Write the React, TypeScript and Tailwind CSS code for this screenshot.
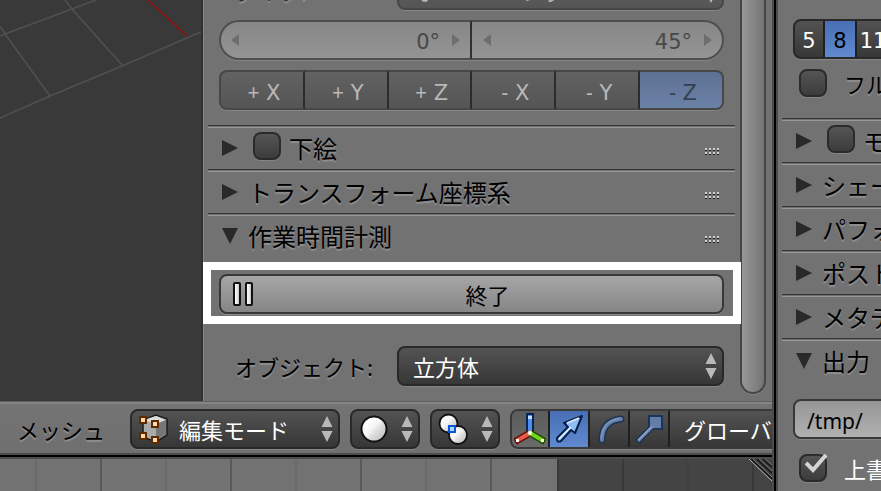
import type { ReactNode } from "react";

const engraved = "[text-shadow:0_2px_1px_rgba(255,255,255,0.22)]";
const dropdown =
  "h-10 rounded-lg border-2 border-[#292929] bg-linear-to-b from-[#535353] to-[#373737] text-white shadow-[0_1px_0_#858585]";

function Disclosure({ open = false }: { open?: boolean }) {
  return (
    <svg className="h-4 w-4 shrink-0" viewBox="0 0 16 16" aria-hidden="true">
      <path d={open ? "M0 0H16L8 16Z" : "M0 0L16 8L0 16Z"} fill="#292929" />
    </svg>
  );
}

function Spinner({ className = "" }: { className?: string }) {
  return (
    <svg className={`pointer-events-none h-[26px] w-3 shrink-0 ${className}`} viewBox="0 0 12 26" fill="#b9b9b9" aria-hidden="true">
      <path d="M6 0L11.5 11H.5ZM6 26L.5 15H11.5Z" />
    </svg>
  );
}

function Grip() {
  return (
    <svg className="mt-2 h-[7px] w-[15px]" viewBox="0 0 15 7" shapeRendering="crispEdges" aria-hidden="true">
      {[0, 4, 8, 12].map((x) =>
        [0, 4].map((y) => (
          <g key={`${x}-${y}`}>
            <rect x={x} y={y} width="2" height="2" fill="#d0d0d0" />
            <rect x={x} y={y + 2} width="2" height="1" fill="#222" />
          </g>
        )),
      )}
    </svg>
  );
}

function Tick({ label, checked = false }: { label: string; checked?: boolean }) {
  return (
    <span className="relative h-7 w-7 shrink-0">
      <input
        type="checkbox"
        aria-label={label}
        defaultChecked={checked}
        className="block h-7 w-7 appearance-none rounded-lg border-2 border-[#2b2b2b] bg-linear-to-b from-[#555] to-[#3c3c3c] shadow-[0_1px_0_#858585]"
      />
      {checked && (
        <svg className="pointer-events-none absolute top-0 left-1.5 h-5 w-6" viewBox="0 0 24 20" fill="none" aria-hidden="true">
          <path d="M1 9L8 16L21 1" stroke="#d4d4d4" strokeWidth="4" />
        </svg>
      )}
    </span>
  );
}

function Section({ title, open, tick, grip }: { title: string; open?: boolean; tick?: boolean; grip?: boolean }) {
  return (
    <div className="flex h-11 shrink-0 items-center border-t border-[#353535] pl-3.5 shadow-[inset_0_1px_0_#707070,inset_0_2px_0_#989898]">
      <button type="button" aria-label={title} aria-expanded={!!open} className="flex">
        <Disclosure open={open} />
      </button>
      {tick && (
        <span className="-mt-1 ml-[15px] flex">
          <Tick label={title} />
        </span>
      )}
      <h2 className={`flex-1 text-[24px] leading-8 whitespace-nowrap text-black ${tick ? "ml-2" : "ml-2.5"} ${engraved}`}>{title}</h2>
      {grip && <div className="mr-[15px] flex"><Grip /></div>}
    </div>
  );
}

function NumberField({ label, value, side }: { label: string; value: string; side: "left" | "right" }) {
  return (
    <div
      className={`flex h-10 min-w-0 flex-1 items-center border-2 border-[#4e4e4e] bg-linear-to-b from-[#878787] to-[#949494] shadow-[0_1px_0_#858585] ${
        side === "left" ? "rounded-l-full border-r-[#303030] px-2.5" : "rounded-r-full border-l-0 pr-2.5 pl-[11px]"
      }`}
    >
      <svg className="h-3 w-2 shrink-0" viewBox="0 0 8 12" aria-hidden="true"><path d="M8 0V12L0 6Z" fill="#6e6e6e" /></svg>
      <input
        aria-label={label}
        defaultValue={value}
        className="mt-1 min-w-0 flex-1 bg-transparent pr-3 text-right font-['DejaVu_Sans',sans-serif] text-[21px] leading-8 text-[#484848] outline-none"
      />
      <svg className="h-3 w-2 shrink-0" viewBox="0 0 8 12" aria-hidden="true"><path d="M0 0V12L8 6Z" fill="#6e6e6e" /></svg>
    </div>
  );
}

function AxisButtons() {
  const axes = ["+ X", "+ Y", "+ Z", "- X", "- Y", "- Z"];
  return (
    <div className="flex h-10 rounded-lg shadow-[0_1px_0_#858585]">
      {axes.map((axis, i) => (
        <button
          key={axis}
          type="button"
          aria-pressed={i === 5}
          className={`flex-1 border-y-2 border-[#474747] bg-linear-to-b pt-1 pl-1 font-['DejaVu_Sans',sans-serif] text-[21px] leading-8 ${
            i < 5 ? "border-r-2 border-r-[#2c2c2c] from-[#626262] to-[#555] text-[#b8b8b8]" : "rounded-r-lg border-r-2 from-[#5c7193] to-[#6c81a6] text-[#343f52]"
          } ${i === 0 ? "rounded-l-lg border-l-2" : ""}`}
        >
          <span className="font-['Noto_Sans',sans-serif]">{axis[0]}</span>
          {axis.slice(1)}
        </button>
      ))}
    </div>
  );
}

function Viewport() {
  return (
    <div className="min-w-0 flex-1 overflow-hidden border-r-2 border-[#303030] bg-[#393939]">
      <svg className="h-[402px] w-[203px]" viewBox="0 0 203 402" fill="none" stroke="#505050" strokeWidth="1.6" aria-hidden="true">
        <path d="M0 118L50 96L122 66L203 31M0 36L5 34L72 9L96 0M0 26L5 34L50 96M65 0L72 9L122 65" />
        <path d="M148 0L187 36" stroke="#960d0d" />
      </svg>
    </div>
  );
}

function ToolPanel() {
  return (
    <div className="flex w-[569px] shrink-0 overflow-hidden bg-[#727272] shadow-[inset_1px_0_0_#858585]">
      <div className="-mt-[30px] flex w-[538px] shrink-0 flex-col">
        <div className="flex flex-col gap-2.5 pr-[17px] pl-4">
          <div className="flex h-10 items-center">
            <label htmlFor="kind" className={`w-[178px] pl-4 text-[22px] leading-8 text-[#333] ${engraved}`}>タイプ:</label>
            <div className="relative flex-1">
              <select id="kind" className="block h-10 w-full appearance-none rounded-lg border-2 border-[#474747] bg-linear-to-b from-[#626262] to-[#555] px-3.5 text-[22px] text-[#b8b8b8] shadow-[0_1px_0_#858585]">
                <option>オーバーハング</option>
              </select>
              <Spinner className="absolute top-[7px] right-[7px]" />
            </div>
          </div>
          <div className="flex">
            <NumberField label="最小角度" value="0°" side="left" />
            <NumberField label="最大角度" value="45°" side="right" />
          </div>
          <AxisButtons />
        </div>
        <div className="mt-[15px] mr-1.5 ml-[5px]">
          <Section title="下絵" tick grip />
          <Section title="トランスフォーム座標系" grip />
          <Section title="作業時間計測" open grip />
        </div>
        <div className="z-10 mt-[5px] border-8 border-white bg-[#727272] pt-1 pr-[9px] pb-0.5 pl-2">
          <button type="button" className="flex h-10 w-full items-center rounded-lg border-2 border-[#383838] bg-linear-to-b from-[#a6a6a6] to-[#868686] pl-3 shadow-[0_1px_0_#909090]">
            <svg className="h-6 w-5 shrink-0" viewBox="0 0 20 24" aria-hidden="true">
              <defs>
                <linearGradient id="pause" x2="1"><stop stopColor="#fff" /><stop offset=".5" stopColor="#eee" /><stop offset="1" stopColor="#aaa" /></linearGradient>
              </defs>
              <g fill="url(#pause)" stroke="#111" strokeWidth="2">
                <rect x="1" y="1" width="6" height="22" rx="1" />
                <rect x="13" y="1" width="6" height="22" rx="1" />
              </g>
            </svg>
            <span className="flex-1 text-center text-[22px] leading-8 text-black">終了</span>
          </button>
        </div>
        <div className="mt-[22px] flex h-10 items-center pr-[17px] pl-4">
          <label htmlFor="object" className={`w-[178px] pl-4 text-[22px] leading-8 text-black ${engraved}`}>オブジェクト:</label>
          <div className="relative flex-1">
            <select id="object" className={`block w-full appearance-none px-3.5 text-[22px] ${dropdown}`}>
              <option>立方体</option>
            </select>
            <Spinner className="absolute top-[7px] right-[7px]" />
          </div>
        </div>
      </div>
      <div className="-ml-px h-[394px] w-[26px] rounded-b-full border-x-2 border-b-2 border-[#464646] bg-linear-to-r from-[#989898] to-[#747474] shadow-[0_1px_0_#858585]" />
    </div>
  );
}

function EditModeIcon() {
  return (
    <svg className="h-[30px] w-[30px] shrink-0" viewBox="0 0 30 30" aria-hidden="true">
      <path d="M4 6L17 1L28 5V21L17 28L4 23Z" fill="#aaa" stroke="#1a1a1a" strokeWidth="1.500" />
      <path d="M5 6L17 2L27 6L17 10Z" fill="#ddd" />
      <path d="M17 10L27 6V21L17 26Z" fill="#777" />
      <g fill="#ffd9a8" stroke="#5a2c00" strokeWidth="2">
        <rect x="1" y="3" width="6" height="6" /><rect x="13" y="7" width="6" height="6" />
        <rect x="1" y="19" width="6" height="6" /><rect x="13" y="23" width="6" height="6" />
      </g>
    </svg>
  );
}

function ManipulatorButton({ label, active, children }: { label: string; active?: boolean; children: ReactNode }) {
  return (
    <button
      type="button"
      aria-label={label}
      aria-pressed={!!active}
      className={`flex w-10 shrink-0 items-center justify-center border-r-2 border-[#1f1f1f] ${active ? "bg-linear-to-b from-[#486fb3] to-[#6089cf]" : ""}`}
    >
      <svg className="h-8 w-8" viewBox="0 0 32 32" fill="none" aria-hidden="true">{children}</svg>
    </button>
  );
}

function HeaderBar() {
  return (
    <header className="flex h-[52px] shrink-0 items-start gap-2.5 overflow-hidden border-t border-[#606060] bg-linear-to-b from-[#747474] to-[#6f6f6f] pt-[7px] pl-[17px] shadow-[inset_0_2px_0_#858585]">
      <button type="button" className={`h-10 w-[103px] text-left text-[22px] leading-8 text-black ${engraved}`}>メッシュ</button>
      <button type="button" aria-haspopup="listbox" className={`flex w-[210px] shrink-0 items-center pr-[5px] pl-[7px] ${dropdown}`}>
        <EditModeIcon />
        <span className="ml-2.5 flex-1 text-left text-[22px] leading-8">編集モード</span>
        <Spinner />
      </button>
      <button type="button" aria-label="シェーディング" aria-haspopup="listbox" className={`flex w-[70px] shrink-0 items-center justify-between pr-[5px] pl-2 ${dropdown}`}>
        <svg className="h-7 w-7" viewBox="0 0 28 28" aria-hidden="true">
          <defs>
            <linearGradient id="ball" x2="1" y2="1"><stop offset=".2" stopColor="#fff" /><stop offset=".45" stopColor="#f5f5f5" /><stop offset=".6" stopColor="#ddd" /><stop offset="1" stopColor="#b5b5b5" /></linearGradient>
          </defs>
          <circle cx="14" cy="14" r="12.5" fill="url(#ball)" stroke="#111" strokeWidth="2" />
        </svg>
        <Spinner />
      </button>
      <button type="button" aria-label="ピボット" aria-haspopup="listbox" className={`flex w-[70px] shrink-0 items-center justify-between pr-[5px] pl-1.5 ${dropdown}`}>
        <svg className="h-8 w-[30px]" viewBox="0 0 30 32" aria-hidden="true">
          <circle cx="10.500" cy="10.500" r="9" fill="url(#ball)" stroke="#111" strokeWidth="1.800" />
          <circle cx="20" cy="22" r="9" fill="url(#ball)" stroke="#111" strokeWidth="1.800" />
          <rect x="11" y="13" width="6" height="6" fill="#b5d5fa" stroke="#0956df" strokeWidth="2" />
        </svg>
        <Spinner />
      </button>
      <div className="flex h-10 min-w-0 flex-1 overflow-hidden rounded-l-lg border-y-2 border-l-2 border-[#393939] bg-linear-to-b from-[#535353] to-[#373737] shadow-[0_1px_0_#858585]">
        <button type="button" aria-label="マニピュレーター" className="flex w-[38px] shrink-0 items-center justify-center border-r-2 border-[#1f1f1f] bg-linear-to-b from-[#5c5c5c] to-[#6a6a6a]">
          <svg className="h-8 w-8" viewBox="0 0 32 32" aria-hidden="true">
            <path d="M16 20V4" stroke="#082452" strokeWidth="8" strokeLinecap="square" />
            <path d="M16 20L4 27" stroke="#6b0d05" strokeWidth="7" strokeLinecap="square" />
            <path d="M16 20L28 27" stroke="#1d4a05" strokeWidth="7" strokeLinecap="square" />
            <path d="M16 20V4" stroke="#4d8eee" strokeWidth="4" strokeLinecap="square" />
            <path d="M16 20L4 27" stroke="#ec5a48" strokeWidth="4" strokeLinecap="square" />
            <path d="M16 20L28 27" stroke="#74d51c" strokeWidth="4" strokeLinecap="square" />
            <g fill="#fff"><rect x="14" y="3" width="4" height="3" fill="#bfdcff" /><rect x="2" y="26" width="3" height="3" /><rect x="27" y="26" width="3" height="3" /><circle cx="16" cy="20" r="2" /></g>
          </svg>
        </button>
        <ManipulatorButton label="移動" active>
          <path d="M4 25L15 14L11 10L29 3L22 20L18 17L8 28Q3 30 4 25Z" fill="#8fbdf5" stroke="#071f4b" strokeWidth="2" strokeLinejoin="round" />
          <path d="M6 26L18 14M14 10L26 5" stroke="#e0f0ff" strokeWidth="1.500" />
        </ManipulatorButton>
        <ManipulatorButton label="回転">
          <path d="M9 27Q9 8 28 6" stroke="#1f3354" strokeWidth="7" strokeLinecap="round" />
          <path d="M9 27Q9 8 28 6" stroke="#627da8" strokeWidth="4" strokeLinecap="round" />
          <path d="M8 26Q9 8 27 5" stroke="#8da4c6" strokeWidth="1" />
        </ManipulatorButton>
        <ManipulatorButton label="拡大縮小">
          <path d="M6 27L19 14" stroke="#1f3354" strokeWidth="6" strokeLinecap="round" />
          <path d="M16 3H29V16H16Z" fill="#627da8" stroke="#1f3354" strokeWidth="2" />
          <path d="M6 27L19 14" stroke="#738db5" strokeWidth="3" strokeLinecap="round" />
          <path d="M5 27L18 14" stroke="#9db1cf" />
        </ManipulatorButton>
        <button type="button" className="min-w-0 flex-1 overflow-hidden pl-3.5 text-left text-[22px] leading-8 whitespace-nowrap text-white">グローバル</button>
      </div>
    </header>
  );
}

function Timeline() {
  return (
    <div className="relative flex h-8 shrink-0 overflow-hidden bg-[#727272]">
      <div className="w-[37px] shrink-0 border-r-2 border-[#6a6a6a]" />
      {[0, 1, 2, 3, 4, 5, 6, 7].map((n) => (
        <div key={n} className={`w-[65px] shrink-0 ${n === 7 ? "" : "border-r-2"} ${n % 2 ? "border-[#6a6a6a]" : "border-[#595959]"}`} />
      ))}
      <div className="flex flex-1 border-l-2 border-[#393939] bg-[#444]">
        <div className="w-[65px] border-r-2 border-[#393939]" />
        <div className="w-[65px] border-r-2 border-[#404040]" />
        <div className="w-[65px] border-r-2 border-[#393939]" />
      </div>
      <svg className="absolute top-0 right-0 h-[22px] w-6" viewBox="0 0 24 22" aria-hidden="true">
        <path d="M3 0L24 20M9 0L24 14M15 0L24 8" stroke="#1a1a1a" strokeWidth="2" />
        <path d="M5 0L24 18M11 0L24 12M17 0L24 6" stroke="#777" />
        <path d="M1 0L24 22" stroke="#bbb" />
      </svg>
    </div>
  );
}

function PropertiesEditor() {
  return (
    <aside className="w-[103px] shrink-0 overflow-hidden bg-[#727272]">
      <div className="flex w-60 flex-col">
        <div className="mt-[19px] ml-[15px] flex h-10 overflow-hidden rounded-lg border-2 border-[#292929] bg-linear-to-b from-[#535353] to-[#373737] font-['DejaVu_Sans',sans-serif] text-[21px] leading-8 text-white shadow-[0_1px_0_#858585]">
          <button type="button" className="w-[30px] border-r-2 border-[#1f1f1f] pt-1">5</button>
          <button type="button" aria-pressed="true" className="w-8 border-r-2 border-[#1f1f1f] bg-linear-to-b from-[#486fb3] to-[#6089cf] pt-1 text-black">8</button>
          <button type="button" className="w-8 pt-1">11</button>
        </div>
        <div className="mt-2.5 flex h-7 items-center pl-[21px]">
          <Tick label="フルサンプル" />
          <span className={`ml-[17px] text-[22px] leading-8 text-black ${engraved}`}>フルサンプル</span>
        </div>
        <div className="mt-[21px] ml-1">
          <Section title="モーションブラー" tick />
          <Section title="シェーディング" />
          <Section title="パフォーマンス" />
          <Section title="ポスト処理" />
          <Section title="メタデータ" />
          <Section title="出力" open />
        </div>
        <input
          aria-label="出力パス"
          defaultValue="/tmp/"
          className="mt-[17px] ml-[15px] h-10 rounded-lg border-2 border-[#383838] bg-linear-to-b from-[#969696] to-[#b0b0b0] px-3 pt-1 font-['Noto_Sans',sans-serif] text-[21px] text-black shadow-[0_1px_0_#858585] outline-none"
        />
        <div className="mt-[15px] flex h-7 items-center pl-[21px]">
          <Tick label="上書き" checked />
          <span className="ml-[17px] text-[22px] leading-8 text-white">上書き</span>
        </div>
      </div>
    </aside>
  );
}

export default function App() {
  return (
    <div className="flex h-screen overflow-hidden font-['Noto_Sans_CJK_JP',sans-serif]">
      <main className="flex min-w-0 flex-1 flex-col">
        <div className="flex min-h-0 flex-1 overflow-hidden">
          <Viewport />
          <ToolPanel />
        </div>
        <HeaderBar />
        <div className="h-1.5 shrink-0 border-y-2 border-[#4c4c4c] bg-black" />
        <Timeline />
      </main>
      <div className="w-1.5 shrink-0 border-x-2 border-[#4c4c4c] bg-black" />
      <PropertiesEditor />
    </div>
  );
}
